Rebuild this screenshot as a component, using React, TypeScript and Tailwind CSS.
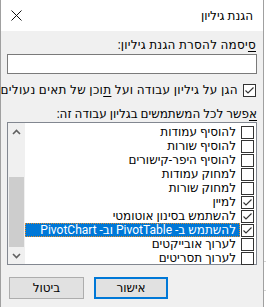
import React from "react";

const items = [
  { t: "להוסיף עמודות", c: false },
  { t: "להוסיף שורות", c: false },
  { t: "להוסיף היפר-קישורים", c: false },
  { t: "למחוק עמודות", c: false },
  { t: "למחוק שורות", c: false },
  { t: "למיין", c: true },
  { t: "להשתמש בסינון אוטומטי", c: true },
  { t: "להשתמש ב- PivotTable וב- PivotChart", c: true, sel: true },
  { t: "לערוך אובייקטים", c: false },
  { t: "לערוך תסריטים", c: false },
];

function Box({ checked }: { checked: boolean }) {
  return (
    <span className="flex w-[13px] h-[13px] shrink-0 items-center justify-center bg-white border border-[#333333]">
      {checked ? (
        <svg width="11" height="11" viewBox="0 0 11 11">
          <polyline points="1.5,5.5 4,8 9.5,2.5" fill="none" stroke="#333333" strokeWidth="1.1" />
        </svg>
      ) : null}
    </span>
  );
}

export default function App() {
  return (
    <div
      className="w-[266px] h-[307px] bg-white flex overflow-hidden text-[12px] leading-4 text-black"
      style={{ fontFamily: 'Roboto, "DejaVu Sans", "Liberation Sans", sans-serif' }}
    >
      <div dir="rtl" className="w-[264px] h-full flex flex-col border-x border-[#a0a0a0]">
        <div className="h-[31px] shrink-0 bg-white flex items-center justify-between">
          <span className="pr-[10px]">הגנת גיליון</span>
          <svg className="ml-[10px]" width="11" height="11" viewBox="0 0 11 11">
            <path d="M0.5 0.5 L10.5 10.5 M10.5 0.5 L0.5 10.5" stroke="#111" strokeWidth="1" />
          </svg>
        </div>
        <div className="flex-1 bg-[#f0f0f0] px-[6px] flex flex-col">
          <div className="mt-[6px] h-4 pr-[1px] tracking-[0.25px] whitespace-nowrap">
            <u className="underline-offset-2">ס</u>יסמה להסרת הגנת גיליון:
          </div>
          <div className="mt-[1px] h-[20px] bg-white border border-[#7a7a7a]" />
          <div className="mt-[8px] h-4 flex items-center gap-[5px] pr-[1px]">
            <Box checked />
            <span className="whitespace-nowrap tracking-[0.33px]">
              הגן על גיליון עבודה ועל <u className="underline-offset-2">ת</u>וכן של תאים נעולים
            </span>
          </div>
          <div className="mt-[8px] h-4 whitespace-nowrap">
            <u className="underline-offset-2">א</u>פשר לכל המשתמשים בגליון עבודה זה:
          </div>
          <div className="h-[143px] bg-white border border-[#828790] flex">
            <div className="flex-1 flex flex-col pt-[2px]">
              {items.map((it) => (
                <div key={it.t} className="h-[14px] flex items-center">
                  <span className="mr-[2px] ml-[1px]">
                    <Box checked={it.c} />
                  </span>
                  {it.sel ? (
                    <span className="flex-1 h-[14px] flex items-center bg-[#0078d7] text-white pr-[3px] border border-dotted border-[#e08a2a] whitespace-nowrap">
                      {it.t}
                    </span>
                  ) : (
                    <span className="flex-1 pr-[4px] whitespace-nowrap">{it.t}</span>
                  )}
                </div>
              ))}
            </div>
            <div className="w-[17px] bg-[#f0f0f0] flex flex-col">
              <div className="h-[17px] flex items-center justify-center">
                <svg width="9" height="6" viewBox="0 0 9 6">
                  <polyline points="1,5 4.5,1.5 8,5" fill="none" stroke="#606060" strokeWidth="1.6" />
                </svg>
              </div>
              <div className="flex-1 flex flex-col justify-end">
                <div className="h-[70px] bg-[#cdcdcd] mx-[1px]" />
              </div>
              <div className="h-[17px] flex items-center justify-center">
                <svg width="9" height="6" viewBox="0 0 9 6">
                  <polyline points="1,1 4.5,4.5 8,1" fill="none" stroke="#606060" strokeWidth="1.6" />
                </svg>
              </div>
            </div>
          </div>
          <div className="mt-[12px] flex justify-end gap-[10px] pl-[2px]">
            <div className="w-[74px] h-[22px] flex items-center justify-center bg-[#e1e1e1] border-2 border-[#0078d7]">
              אישור
            </div>
            <div className="w-[75px] h-[22px] flex items-center justify-center bg-[#e1e1e1] border border-[#adadad]">
              ביטול
            </div>
          </div>
        </div>
      </div>
      <div className="flex-1 h-full bg-white flex flex-col">
        <div className="h-[262px] border-b border-[#d4d4d4]" />
        <div className="h-[29px] border-b border-[#d4d4d4]" />
      </div>
    </div>
  );
}
